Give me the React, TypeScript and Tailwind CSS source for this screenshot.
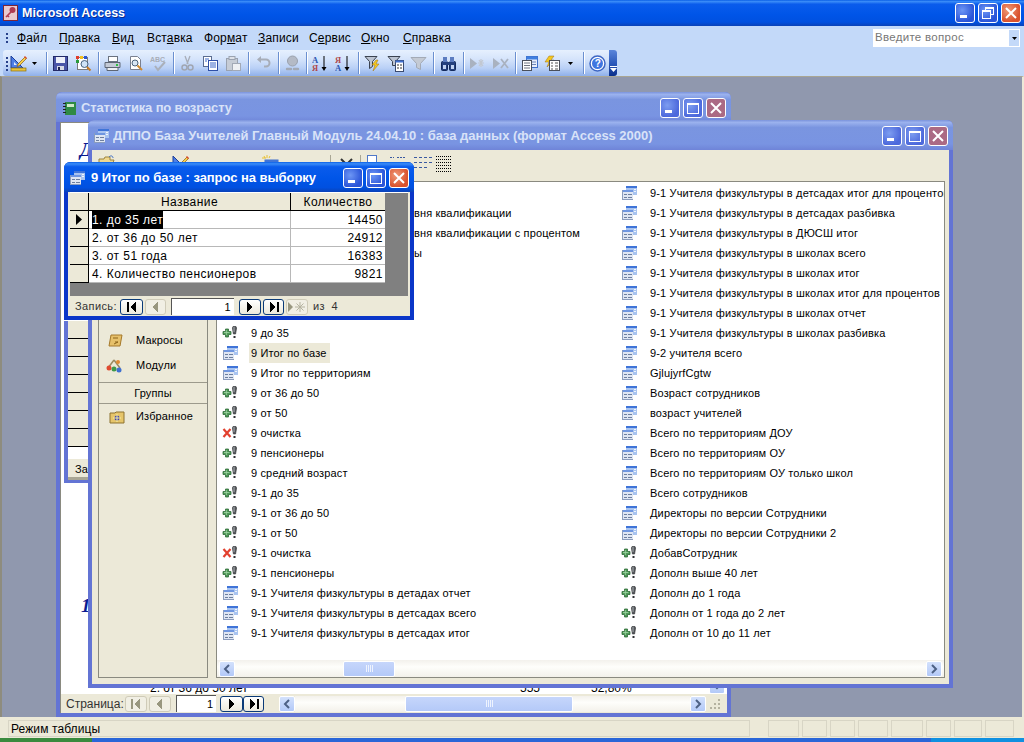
import type { ReactNode } from "react";

const ui = { fontFamily: '"Liberation Sans", Arial, sans-serif' };
const serif = { fontFamily: '"Liberation Serif", serif' };

const titleActive =
  "bg-[linear-gradient(180deg,#0a5fe6_0%,#3a8cf8_6%,#0a5cec_16%,#0055e8_55%,#0050e0_85%,#0a42b8_100%)]";
const titleInactive =
  "bg-[linear-gradient(180deg,#7b93dc_0%,#9bb2ee_8%,#7a95e0_25%,#7994e2_80%,#6f84d8_100%)]";

function QueryIcon() {
  return (
    <svg width="16" height="16" viewBox="0 0 16 16" shapeRendering="crispEdges">
      <rect x="5" y="1" width="11" height="9" fill="#a9c4f0" />
      <rect x="5" y="1" width="11" height="2" fill="#3f74d8" />
      <rect x="13" y="4" width="2" height="1" fill="#f0f5fd" />
      <rect x="13" y="6" width="2" height="1" fill="#f0f5fd" />
      <rect x="1" y="5" width="11" height="10" fill="#dfe6f3" />
      <rect x="1" y="5" width="11" height="2" fill="#6f96e0" />
      <rect x="1" y="14" width="11" height="1" fill="#8b9cbc" />
      <rect x="1" y="5" width="1" height="10" fill="#8b9cbc" />
      <rect x="3" y="9" width="3" height="1" fill="#6d7f9f" />
      <rect x="7" y="9" width="4" height="1" fill="#6d7f9f" />
      <rect x="3" y="12" width="3" height="1" fill="#6d7f9f" />
      <rect x="7" y="12" width="4" height="1" fill="#6d7f9f" />
    </svg>
  );
}

function Bang() {
  return (
    <g>
      <path d="M11 1.500h3l.6 1.500-1 6h-2.200l-1-6z" fill="#55585c" stroke="#2f3134" strokeWidth="0.6" />
      <rect x="11.500" y="2" width="1" height="5" fill="#a9adb2" />
      <rect x="11.500" y="11" width="2" height="2" fill="#2f3134" />
    </g>
  );
}

function PlusBang() {
  return (
    <svg width="16" height="16" viewBox="0 0 16 16">
      <path d="M3.500 4h3v2.500H9v3H6.500V12h-3V9.500H1v-3h2.500z" fill="#4f9a58" stroke="#2e6b38" strokeWidth="0.8" />
      <path d="M4.300 5v5M2 7.500h5.500" stroke="#9fd6a4" strokeWidth="0.8" />
      <Bang />
    </svg>
  );
}

function CrossBang() {
  return (
    <svg width="16" height="16" viewBox="0 0 16 16">
      <path d="M1.500 4l7 8M8.500 4l-7 8" stroke="#e2402e" strokeWidth="2.200" />
      <Bang />
    </svg>
  );
}

function Sep() {
  return (
    <div className="flex h-[22px] w-[6px] shrink-0 justify-center">
      <div className="h-full w-px bg-[#6a8fd0] shadow-[1px_0_0_#fff]" />
    </div>
  );
}

function Btn({ children, w = "w-[23px]" }: { children: ReactNode; w?: string }) {
  return <div className={`flex h-[22px] shrink-0 items-center justify-center ${w}`}>{children}</div>;
}

function Caret() {
  return (
    <svg width="5" height="3" viewBox="0 0 5 3">
      <path d="M0 0h5L2.500 3z" fill="#000" />
    </svg>
  );
}

function Caret2() {
  return (
    <svg width="7" height="4" viewBox="0 0 7 4">
      <path d="M0 0h7L3.500 4z" fill="#fff" />
    </svg>
  );
}

const S = ({ children }: { children: ReactNode }) => (
  <svg width="17" height="17" viewBox="0 0 17 17">
    {children}
  </svg>
);

function DesignGlyph() {
  return (
    <S>
      <path d="M1 1v12h12z" fill="#4d7fe6" stroke="#1d3f9a" />
      <path d="M4 7v3h3z" fill="#dfe9fb" />
      <path d="M8 9l7-7 1.500 1.500-7 7-2.500 1z" fill="#f6d04d" stroke="#8a5a10" strokeWidth="0.7" />
      <path d="M14 2l1-1 2 2-1 1z" fill="#d8482c" />
      <rect x="1" y="13" width="15" height="3" fill="#e8c23c" stroke="#8a7010" strokeWidth="0.7" />
    </S>
  );
}

function Toolbar() {
  return (
    <div className="relative z-10 flex h-[26px] shrink-0 items-center pl-[1px]">
      <div className="ml-[2px] flex h-[26px] w-[614px] items-center rounded-[3px] bg-[linear-gradient(180deg,#e6f0fe_0%,#d5e4fb_35%,#b9d0f6_70%,#8fb0ea_100%)]">
        <div className="ml-[3px] flex w-[7px] flex-col gap-[2px] pt-[1px]">
          {[0, 1, 2, 3].map((i) => (
            <div key={i} className="h-[2px] w-[2px] bg-[#27418a]" />
          ))}
        </div>
        <div className="flex h-[22px] w-[33px] shrink-0 items-center gap-[5px]">
          <DesignGlyph />
          <Caret />
        </div>
        <Sep />
        <Btn>
          <S>
            <rect x="1.500" y="1.500" width="14" height="14" fill="#4a55a8" stroke="#242a68" />
            <rect x="4" y="2" width="9" height="6" fill="#eef0fa" />
            <rect x="5" y="11" width="7" height="4" fill="#d8dae6" />
            <rect x="6" y="12" width="2" height="3" fill="#1e2250" />
          </S>
        </Btn>
        <Btn>
          <S>
            <rect x="2.500" y="2.500" width="10" height="12" fill="#fff" stroke="#7a7a7a" />
            <rect x="1" y="1" width="3" height="3" fill="#e23b2a" />
            <rect x="5" y="1" width="3" height="3" fill="#f0c020" />
            <rect x="1" y="5" width="3" height="3" fill="#2a9a3a" />
            <rect x="9" y="1" width="3" height="3" fill="#2a55d0" />
            <circle cx="9.500" cy="9" r="3.500" fill="#cfe3f7" stroke="#47627f" />
            <path d="M12 12l3.500 3.500" stroke="#c87a20" strokeWidth="2" />
          </S>
        </Btn>
        <Sep />
        <Btn>
          <S>
            <rect x="4.500" y="1.500" width="9" height="5" fill="#fff" stroke="#6a7280" />
            <path d="M1 7.500h15v5H1z" fill="#c4cad6" stroke="#5e6674" />
            <path d="M3 12.500h11v3H3z" fill="#eef0f4" stroke="#5e6674" />
            <rect x="12" y="9" width="2" height="2" fill="#30c040" />
          </S>
        </Btn>
        <Btn>
          <S>
            <path d="M3.500 1.500h7l3 3v10h-10z" fill="#fff" stroke="#7a8090" />
            <circle cx="8" cy="8" r="3" fill="#d9e7f5" stroke="#4c627a" />
            <path d="M10.500 10.500l4.500 4.500" stroke="#d08a30" strokeWidth="2" />
          </S>
        </Btn>
        <Btn>
          <svg width="17" height="17" viewBox="0 0 17 17">
            <text x="0" y="7" fontSize="7" fontWeight="700" fill="#a7adb8" style={ui}>
              ABC
            </text>
            <path d="M5 11l3 4 7-8" fill="none" stroke="#aab0ba" strokeWidth="2" />
          </svg>
        </Btn>
        <Sep />
        <Btn>
          <S>
            <path d="M6 1l3 8M11 1L8 9" stroke="#a7adb8" strokeWidth="1.300" />
            <circle cx="5.500" cy="12.500" r="2.500" fill="none" stroke="#a0a6b2" strokeWidth="1.500" />
            <circle cx="11.500" cy="12.500" r="2.500" fill="none" stroke="#a0a6b2" strokeWidth="1.500" />
          </S>
        </Btn>
        <Btn>
          <S>
            <rect x="1.500" y="1.500" width="8" height="10" fill="#fff" stroke="#5a6c90" />
            <rect x="6.500" y="5.500" width="9" height="10" fill="#fff" stroke="#2e4fa8" />
            <path d="M8 8h6M8 10h6M8 12h6M3 4h4M3 6h2" stroke="#3b66c8" />
          </S>
        </Btn>
        <Btn>
          <S>
            <rect x="1.500" y="3.500" width="11" height="12" fill="#c6ccd6" stroke="#9aa2b0" />
            <rect x="4" y="1.500" width="6" height="3" fill="#dde1e8" stroke="#9aa2b0" />
            <rect x="7.500" y="8.500" width="8" height="7" fill="#eef0f4" stroke="#a2a9b6" />
          </S>
        </Btn>
        <Sep />
        <Btn w="w-[24px]">
          <S>
            <path d="M5 4.500h6a3.500 3.500 0 0 1 0 7H9" fill="none" stroke="#a7adb8" strokeWidth="2" />
            <path d="M6 1v7L2 4.500z" fill="#a7adb8" />
          </S>
        </Btn>
        <Sep />
        <Btn w="w-[22px]">
          <S>
            <circle cx="8.500" cy="6" r="5" fill="#b4bac6" stroke="#9aa1ae" />
            <path d="M3 14h4M10 14h4" stroke="#a2a9b6" strokeWidth="2.400" strokeLinecap="round" />
          </S>
        </Btn>
        <Sep />
        <Btn>
          <svg width="17" height="17" viewBox="0 0 17 17">
            <text x="0" y="7.500" fontSize="8.500" fontWeight="700" fill="#2b56b0" style={serif}>
              А
            </text>
            <text x="0" y="16" fontSize="8.500" fontWeight="700" fill="#b04a4a" style={serif}>
              Я
            </text>
            <path d="M12 1v12" stroke="#000" />
            <path d="M9.500 12h5L12 16z" fill="#000" />
          </svg>
        </Btn>
        <Btn>
          <svg width="17" height="17" viewBox="0 0 17 17">
            <text x="0" y="7.500" fontSize="8.500" fontWeight="700" fill="#b04a4a" style={serif}>
              Я
            </text>
            <text x="0" y="16" fontSize="8.500" fontWeight="700" fill="#2b56b0" style={serif}>
              А
            </text>
            <path d="M12 1v12" stroke="#000" />
            <path d="M9.500 12h5L12 16z" fill="#000" />
          </svg>
        </Btn>
        <Sep />
        <Btn>
          <S>
            <path d="M1 1.500h12l-4.500 5v5l-3 2v-7z" fill="#bcc4d2" stroke="#3a4250" />
            <path d="M12 5l-4 5h3l-2 6 6-7h-3l2-4z" fill="#f4c820" stroke="#a07010" strokeWidth="0.5" />
          </S>
        </Btn>
        <Btn>
          <S>
            <path d="M1 1.500h12l-4.500 5v4h-3v-4z" fill="#bcc4d2" stroke="#3a4250" />
            <rect x="8.500" y="5.500" width="8" height="11" fill="#fff" stroke="#3a4a70" />
            <rect x="8.500" y="5.500" width="8" height="2" fill="#3f6fd0" />
            <path d="M10 10h2M13 10h2M10 13h2M13 13h2" stroke="#333" />
          </S>
        </Btn>
        <Btn>
          <S>
            <path d="M1 2.500h15l-5.500 6v6l-4 -2v-4z" fill="#c4cad4" stroke="#a3aab6" />
          </S>
        </Btn>
        <Sep />
        <Btn w="w-[24px]">
          <S>
            <rect x="1.500" y="6.500" width="6" height="9" rx="1" fill="#24407e" stroke="#142a5c" />
            <rect x="9.500" y="6.500" width="6" height="9" rx="1" fill="#24407e" stroke="#142a5c" />
            <rect x="3" y="2" width="4" height="5" fill="#5c7cc0" />
            <rect x="10" y="2" width="4" height="5" fill="#5c7cc0" />
            <rect x="7" y="7" width="3" height="3" fill="#24407e" />
            <rect x="3" y="10" width="3" height="4" fill="#c0d2f2" />
            <rect x="11" y="10" width="3" height="4" fill="#c0d2f2" />
          </S>
        </Btn>
        <Sep />
        <Btn>
          <S>
            <path d="M1 3l7 5.500L1 14z" fill="#a9b2c0" />
            <path d="M10 5l4 6M14 5l-4 6M9 8h6M12 4v8" stroke="#c2c8d2" strokeWidth="1.200" />
          </S>
        </Btn>
        <Btn>
          <S>
            <path d="M1 3l7 5.500L1 14z" fill="#a9b2c0" />
            <path d="M9 4l7 9M16 4l-7 9" stroke="#a9b2c0" strokeWidth="1.800" />
          </S>
        </Btn>
        <Sep />
        <Btn>
          <S>
            <rect x="5.500" y="1.500" width="11" height="11" fill="#e8eefb" stroke="#3f6fc8" />
            <rect x="5.500" y="1.500" width="11" height="3" fill="#3f7fe0" />
            <path d="M8 7h7M8 9.500h7" stroke="#6b85b8" />
            <rect x="1.500" y="5.500" width="9" height="10" fill="#fff" stroke="#4a4f5a" />
            <path d="M3 8h6M3 10.500h6M3 13h6" stroke="#6f7480" />
          </S>
        </Btn>
        <div className="flex h-[22px] w-[39px] shrink-0 items-center gap-[8px] pl-[2px]">
          <S>
            <path d="M6 1H11L8 5h3l-7 7 2-5H2z" fill="#f4c820" stroke="#a07010" strokeWidth="0.5" />
            <rect x="6.500" y="5.500" width="10" height="10" fill="#fff" stroke="#4a4f5a" />
            <path d="M8 8h2M12 8h3M8 11h2M12 11h3M8 14h2M12 14h3" stroke="#555" />
          </S>
          <Caret />
        </div>
        <Sep />
        <Btn>
          <S>
            <circle cx="8.500" cy="8.500" r="7.500" fill="#fff" stroke="#3d66c4" strokeWidth="1.500" />
            <circle cx="8.500" cy="8.500" r="5.500" fill="#3f76e0" />
            <text x="5.700" y="12" fontSize="10" fontWeight="700" fill="#fff" style={ui}>
              ?
            </text>
          </S>
        </Btn>
        <div className="ml-auto flex h-[26px] w-[12px] flex-col items-center justify-end rounded-r-[3px] bg-[linear-gradient(180deg,#5a85da_0%,#2a57b8_55%,#0b2f8a_100%)] pb-[4px]">
          <div className="mb-[1px] h-px w-[7px] bg-white" />
          <Caret2 />
        </div>
      </div>
    </div>
  );
}

function Cap({ kind, faded = false }: { kind: "min" | "max" | "restore" | "close"; faded?: boolean }) {
  const bg =
    kind === "close"
      ? faded
        ? "bg-[#ab6a84]"
        : "bg-[radial-gradient(circle_at_35%_35%,#f09a78,#d9512d_70%)]"
      : faded
        ? "bg-[radial-gradient(circle_at_35%_35%,#7d9df0,#4d69dc_70%)]"
        : "bg-[radial-gradient(circle_at_35%_35%,#6d96f5,#2b55d8_70%)]";
  return (
    <div className={`flex h-[20px] w-[20px] items-center justify-center rounded-[3px] border border-white ${bg}`}>
      <svg width="14" height="14" viewBox="0 0 14 14" shapeRendering="crispEdges">
        {kind === "min" && <rect x="2" y="9" width="7" height="3" fill="#fff" />}
        {kind === "max" && <path d="M1.500 2.500h11v10h-11z" fill="none" stroke="#fff" />}
        {kind === "max" && <rect x="1" y="2" width="12" height="2" fill="#fff" />}
        {kind === "restore" && (
          <g fill="none" stroke="#fff">
            <path d="M4.500 4V1.500h8v7H10" />
            <rect x="1.500" y="4.500" width="8" height="8" />
            <path d="M1.500 5.500h8M4.500 2.500h8" />
          </g>
        )}
        {kind === "close" && <path d="M2 2l10 10M12 2L2 12" stroke="#fff" strokeWidth="2" shapeRendering="auto" />}
      </svg>
    </div>
  );
}

function Win({
  className,
  title,
  titleClass,
  icon,
  active = false,
  pad,
  children,
}: {
  className: string;
  title: string;
  titleClass: string;
  icon: ReactNode;
  active?: boolean;
  pad: string;
  children: ReactNode;
}) {
  return (
    <div className={`absolute flex flex-col rounded-t-[6px] ${active ? "bg-[#0a36c8]" : "bg-[#6374d4]"} ${className}`}>
      <div className={`flex h-[30px] shrink-0 items-center rounded-t-[6px] pt-[2px] pr-[5px] ${active ? titleActive : titleInactive} ${pad}`}>
        {icon}
        <div className={`min-w-0 flex-1 truncate text-[13px] font-bold ${titleClass} ${active ? "text-white" : "text-[#d8e2f8]"}`}>{title}</div>
        <div className="flex gap-[3px]">
          <Cap kind="min" faded={!active} />
          <Cap kind="max" faded={!active} />
          <Cap kind="close" faded={!active} />
        </div>
      </div>
      {children}
    </div>
  );
}

function Glyph({ d }: { d: "first" | "prev" | "next" | "last" }) {
  return (
    <svg width="12" height="10" viewBox="0 0 12 10" shapeRendering="crispEdges">
      {d === "first" && <path d="M1 0h2v10H1zM10 0v10L4 5z" />}
      {d === "prev" && <path d="M8 0v10L2 5z" />}
      {d === "next" && <path d="M3 0v10l6-5z" />}
      {d === "last" && <path d="M2 0v10l6-5zM9 0h2v10H9z" />}
    </svg>
  );
}

function NavBtn({ d, w, off = false }: { d: "first" | "prev" | "next" | "last"; w: string; off?: boolean }) {
  return (
    <div
      className={`flex h-[16px] shrink-0 items-center justify-center rounded-[3px] border ${w} ${
        off ? "border-[#cfcbb8] bg-[#f1efe4] fill-[#99977f]" : "border-[#0a3a78] bg-[linear-gradient(180deg,#ffffff,#ece9dc)] fill-black"
      }`}
    >
      <Glyph d={d} />
    </div>
  );
}

function ScrollArrow({ dir, className = "" }: { dir: "left" | "right" | "down"; className?: string }) {
  const paths = { left: "M7 1L3 5l4 4", right: "M3 1l4 4-4 4", down: "M1 3l4 4 4-4" };
  return (
    <div className={`flex h-[16px] w-[16px] shrink-0 items-center justify-center rounded-[2px] border border-white bg-[linear-gradient(180deg,#d3e1fc,#b3c9f8)] ${className}`}>
      <svg width="10" height="10" viewBox="0 0 10 10">
        <path d={paths[dir]} fill="none" stroke="#4d6185" strokeWidth="2" />
      </svg>
    </div>
  );
}

function Thumb({ className }: { className: string }) {
  return (
    <div className={`flex h-[16px] shrink-0 items-center justify-center gap-px rounded-[2px] border border-white bg-[linear-gradient(180deg,#c6d6fb,#b4c9f8)] ${className}`}>
      {[0, 1, 2, 3].map((i) => (
        <div key={i} className="h-[7px] w-px bg-[#eef3fe]" />
      ))}
    </div>
  );
}

const track = "bg-[linear-gradient(180deg,#f3f1ec,#fefefb_40%,#f3f1ea)]";

type Kind = "q" | "p" | "x" | "";

// верхние строки левой колонки закрыты окном запроса, видны только хвосты
const leftRows: [Kind, string][] = [
  ["", ""],
  ["", "вня квалификации"],
  ["", "вня квалификации с процентом"],
  ["", "ы"],
  ["", ""],
  ["", ""],
  ["", ""],
  ["p", "9 до 35"],
  ["q", "9 Итог по базе"],
  ["q", "9 Итог по территориям"],
  ["p", "9 от 36 до 50"],
  ["p", "9 от 50"],
  ["x", "9 очистка"],
  ["p", "9 пенсионеры"],
  ["p", "9 средний возраст"],
  ["p", "9-1 до 35"],
  ["p", "9-1 от 36 до 50"],
  ["p", "9-1 от 50"],
  ["x", "9-1 очистка"],
  ["p", "9-1 пенсионеры"],
  ["q", "9-1 Учителя физкультуры в детадах отчет"],
  ["q", "9-1 Учителя физкультуры в детсадах всего"],
  ["q", "9-1 Учителя физкультуры в детсадах итог"],
];

const rightRows: [Kind, string][] = [
  ["q", "9-1 Учителя физкультуры в детсадах итог для процентов"],
  ["q", "9-1 Учителя физкультуры в детсадах разбивка"],
  ["q", "9-1 Учителя физкультуры в ДЮСШ  итог"],
  ["q", "9-1 Учителя физкультуры в школах всего"],
  ["q", "9-1 Учителя физкультуры в школах итог"],
  ["q", "9-1 Учителя физкультуры в школах итог для процентов"],
  ["q", "9-1 Учителя физкультуры в школах отчет"],
  ["q", "9-1 Учителя физкультуры в школах разбивка"],
  ["q", "9-2 учителя всего"],
  ["q", "GjlujyrfCgtw"],
  ["q", "Возраст сотрудников"],
  ["q", "возраст учителей"],
  ["q", "Всего по территориям ДОУ"],
  ["q", "Всего по территориям ОУ"],
  ["q", "Всего по территориям ОУ только школ"],
  ["q", "Всего сотрудников"],
  ["q", "Директоры по версии Сотрудники"],
  ["q", "Директоры по версии Сотрудники 2"],
  ["p", "ДобавСотрудник"],
  ["p", "Дополн выше 40 лет"],
  ["p", "Дополн до 1 года"],
  ["p", "Дополн от 1 года до 2 лет"],
  ["p", "Дополн от 10 до 11 лет"],
];

function ListColumn({ rows, className }: { rows: [Kind, string][]; className: string }) {
  return (
    <div className={`flex shrink-0 flex-col ${className}`}>
      {rows.map(([k, t], i) => (
        <div key={i} className="flex h-[20px] items-center">
          <div className="flex w-[27px] shrink-0">
            {k === "q" && <QueryIcon />}
            {k === "p" && <PlusBang />}
            {k === "x" && <CrossBang />}
          </div>
          <div className={`whitespace-nowrap pl-[2px] leading-[20px] ${k === "" ? "ml-[163px]" : ""} ${t === "9 Итог по базе" ? "bg-[#ece9d8] pr-[3px]" : ""}`}>
            {t}
          </div>
        </div>
      ))}
    </div>
  );
}

function DbToolbar() {
  return (
    <div className="flex h-[31px] shrink-0 items-start pl-[6px] pt-[5px] text-[11px]">
      <div className="flex w-[74px] shrink-0 gap-[4px]">
        <svg width="17" height="14" viewBox="0 0 17 14">
          <path d="M1 4h5l1-2h5v3h4l-3 8H1z" fill="#f0d890" stroke="#9c8440" />
          <path d="M11 2c2-2 4-1 4 1" fill="none" stroke="#3a6ac0" />
        </svg>
        <span className="pt-[3px]">Открыть</span>
      </div>
      <div className="flex w-[90px] shrink-0 gap-[4px]">
        <DesignGlyph />
        <span className="pt-[3px]">Конструктор</span>
      </div>
      <div className="flex w-[68px] shrink-0 gap-[3px]">
        <svg width="17" height="15" viewBox="0 0 17 15">
          <path d="M2 1l1 2M5 0v3M8 1L7 3M0 3h4" stroke="#e8c030" />
          <rect x="3" y="5" width="13" height="9" fill="#a9c4f0" stroke="#3f6fc8" />
          <rect x="3" y="5" width="13" height="2" fill="#3f74d8" />
        </svg>
        <span className="pt-[3px]">Создать</span>
      </div>
      <div className="h-[18px] w-px shrink-0 bg-[#a9a694]" />
      <div className="ml-[9px] mt-[3px] shrink-0">
        <svg width="13" height="13" viewBox="0 0 13 13">
          <path d="M1 1l11 11M12 1L1 12" stroke="#333" strokeWidth="2" />
        </svg>
      </div>
      <div className="ml-[7px] h-[18px] w-px shrink-0 bg-[#a9a694]" />
      <div className="ml-[6px] shrink-0">
        <svg width="10" height="12" viewBox="0 0 10 12" shapeRendering="crispEdges">
          <rect x="0" y="0" width="9" height="9" fill="#fff" stroke="#4f78c8" />
        </svg>
      </div>
      <div className="ml-[13px] shrink-0">
        <svg width="16" height="12" viewBox="0 0 16 12" shapeRendering="crispEdges">
          <path d="M0 2h4M7 2h8" stroke="#3a5aa0" strokeDasharray="2 1" />
        </svg>
      </div>
      <div className="ml-[8px] shrink-0">
        <svg width="18" height="16" viewBox="0 0 18 16" shapeRendering="crispEdges">
          <path d="M0 2h3M5 2h3M10 2h3M15 2h3M0 7h3M5 7h3M10 7h3M15 7h3M0 12h3M5 12h3M10 12h3" stroke="#3a5aa0" />
        </svg>
      </div>
      <div className="ml-[4px] shrink-0">
        <svg width="16" height="17" viewBox="0 0 16 17" shapeRendering="crispEdges">
          <path d="M0 1h16M0 4h16M0 7h16M0 10h16M0 13h16M0 16h16" stroke="#000" strokeDasharray="1 1" />
        </svg>
      </div>
    </div>
  );
}

function DbWindow() {
  return (
    <Win
      className="left-[86px] top-[43px] h-[568px] w-[865px]"
      title="ДППО База Учителей Главный Модуль 24.04.10 : база данных (формат Access 2000)"
      titleClass="tracking-[-0.04px]"
      icon={
        <div className="mr-[4px] w-[16px] shrink-0">
          <QueryIcon />
        </div>
      }
      pad="pl-[5px]"
    >
      <div className="mx-[4px] mb-[4px] flex min-h-0 flex-1 flex-col bg-[#ece9d8]">
        <DbToolbar />
        <div className="mb-[6px] ml-[6px] mr-[4px] flex min-h-0 flex-1 gap-[8px]">
          <div className="flex w-[110px] shrink-0 flex-col border border-[#8a8a80] bg-[#ece9d8] text-[11px] tracking-[0.15px]">
            <div className="h-[146px] shrink-0" />
            <div className="flex h-[25px] items-center pl-[9px]">
              <svg className="mr-[12px]" width="16" height="16" viewBox="0 0 16 16">
                <path d="M3 2h11l-2 11H1z" fill="#e6c06a" stroke="#a5792a" />
                <path d="M5 5h5M7 9h3l-4 2" stroke="#8a6318" fill="none" />
              </svg>
              Макросы
            </div>
            <div className="flex h-[25px] items-center pl-[7px]">
              <svg className="mr-[14px]" width="16" height="16" viewBox="0 0 16 16">
                <path d="M2 10l6-8M14 10L8 2" stroke="#9a8a60" strokeWidth="1.500" />
                <circle cx="3" cy="10" r="2.500" fill="#e04a30" />
                <circle cx="8" cy="11" r="2.500" fill="#3f9a4a" />
                <circle cx="13" cy="12" r="2.500" fill="#3f70d0" />
                <circle cx="12" cy="4" r="2" fill="#e08a30" />
              </svg>
              Модули
            </div>
            <div className="mt-[4px] flex h-[22px] items-center justify-center border-y border-[#9c9a8c]">Группы</div>
            <div className="flex h-[25px] items-center pl-[10px]">
              <svg className="mr-[11px]" width="16" height="14" viewBox="0 0 16 14">
                <path d="M1 3h5l1-1h8v11H1z" fill="#e6c56a" stroke="#8d7230" />
                <circle cx="8" cy="8" r="2.500" fill="#3a3fb0" />
                <path d="M8 4v8M4 8h8" stroke="#f8f0a0" />
              </svg>
              Избранное
            </div>
          </div>
          <div className="flex min-w-0 flex-1 flex-col border border-[#8a8a80] bg-white text-[11px] tracking-[0.15px] text-black">
            <div className="flex min-h-0 flex-1 gap-[8px] overflow-hidden pl-[5px] pt-[1px]">
              <ListColumn rows={leftRows} className="w-[391px]" />
              <ListColumn rows={rightRows} className="w-[320px]" />
            </div>
            <div className={`flex h-[17px] shrink-0 items-center px-[2px] ${track}`}>
              <ScrollArrow dir="left" />
              <Thumb className="ml-[108px] w-[52px]" />
              <div className="flex-1" />
              <ScrollArrow dir="right" />
            </div>
          </div>
        </div>
      </div>
    </Win>
  );
}

const queryRows: [string, string][] = [
  ["1. до 35 лет", "14450"],
  ["2. от 36 до 50 лет", "24912"],
  ["3. от 51 года", "16383"],
  ["4. Количество пенсионеров", "9821"],
];

function QueryWindow() {
  return (
    <Win
      className="left-[62px] top-[85px] h-[158px] w-[350px]"
      title="9 Итог по базе : запрос на выборку"
      titleClass="tracking-[-0.05px]"
      icon={
        <div className="mr-[5px] w-[17px] shrink-0">
          <QueryIcon />
        </div>
      }
      active
      pad="pl-[5px]"
    >
      <div className="mx-[4px] mb-[4px] flex min-h-0 flex-1 flex-col bg-[#ece9d8] text-[12px] tracking-[0.45px] text-black">
        <div className="mx-[2px] h-[104px] shrink-0 border-t border-white bg-[#808080]">
          <div className="grid w-[315px] grid-cols-[19px_202px_94px]">
            <div className="h-[18px] border-b border-r border-black bg-[#ece9d8]" />
            <div className="flex h-[18px] items-center justify-center border-b border-r border-black bg-[#ece9d8] pt-[1px]">Название</div>
            <div className="flex h-[18px] items-center justify-center border-b border-black bg-[#ece9d8] pt-[1px]">Количество</div>
            {queryRows.map(([name, n], i) => (
              <div key={name} className="contents">
                <div className="flex h-[18px] items-center justify-center border-b border-r border-black bg-[#ece9d8]">
                  {i === 0 && (
                    <svg width="8" height="11" viewBox="0 0 8 11">
                      <path d="M1 0v11l6-5.500z" fill="#000" />
                    </svg>
                  )}
                </div>
                <div className="flex h-[18px] items-center border-b border-r border-[#b8b8b8] bg-white pl-[3px] pt-[1px]">
                  <span className={i === 0 ? "bg-black text-white" : ""}>{name}</span>
                </div>
                <div className="flex h-[18px] items-center justify-end border-b border-[#b8b8b8] bg-white pr-[2px] pt-[1px]">{n}</div>
              </div>
            ))}
          </div>
        </div>
        <div className="flex flex-1 items-center pl-[7px] pt-[1px] text-[#333]">
          <span className="w-[45px] text-[11px] tracking-[0.4px]">Запись:</span>
          <NavBtn d="first" w="w-[23px]" />
          <div className="w-[2px]" />
          <NavBtn d="prev" w="w-[21px]" off />
          <div className="ml-[5px] flex h-[17px] w-[63px] items-center justify-end border-l border-t border-[#555] bg-white pr-[3px] text-[11px] text-black">1</div>
          <div className="w-[5px]" />
          <NavBtn d="next" w="w-[22px]" />
          <div className="w-[2px]" />
          <NavBtn d="last" w="w-[21px]" />
          <div className="ml-[2px] flex h-[16px] w-[22px] items-center justify-center rounded-[3px] border border-[#cfcbb8] bg-[#f1efe4]">
            <svg width="18" height="10" viewBox="0 0 18 10">
              <path d="M0 0v10l5-5z" fill="#99977f" />
              <path d="M12 0v10M7 5h10M8.500 1.500l7 7M15.500 1.500l-7 7" stroke="#b5b3a0" />
            </svg>
          </div>
          <span className="ml-[5px] text-[11px] tracking-[0.3px]">из&nbsp;&nbsp;4</span>
        </div>
      </div>
    </Win>
  );
}

function StatsWindow() {
  return (
    <Win
      className="left-[54px] top-[15px] h-[625px] w-[675px]"
      title="Статистика по возрасту"
      titleClass="tracking-[-0.15px]"
      icon={
        <svg className="mr-[5px] shrink-0" width="13" height="13" viewBox="0 0 13 13" shapeRendering="crispEdges">
          <rect x="2" y="0" width="11" height="13" fill="#2f8a45" />
          <rect x="4" y="2" width="7" height="3" fill="#cfe8c8" />
          <path d="M0 1h3M0 4h3M0 7h3M0 10h3" stroke="#222" />
        </svg>
      }
      pad="pl-[7px]"
    >
      <div className="relative mx-[4px] mb-[4px] flex min-h-0 flex-1 flex-col border-l border-t border-[#8a8a80] bg-white">
        <div className="flex-1 overflow-hidden">
          <div className="pl-[19px] pt-[16px] text-[19px] font-bold italic leading-[22px] text-[#0a1a90]" style={serif}>
            Д
          </div>
          <div className="pl-[20px] pt-[434px] text-[19px] font-bold italic leading-[22px] text-[#0a1a90]" style={serif}>
            1
          </div>
          <div className="flex items-start pl-[89px] pt-[64px] text-[12px] leading-[14px] text-black">
            <span className="w-[370px]">2. от 36 до 50 лет</span>
            <span className="w-[71px]">555</span>
            <span>52,80%</span>
          </div>
        </div>
        {/* окно запроса, что лежит за базой данных */}
        <div className="absolute left-[3px] top-[198px] h-[162px] w-[30px] border-b-[3px] border-l-[4px] border-[#6374d4] bg-white">
          <div className="flex h-full flex-col">
            {[0, 1, 2, 3, 4, 5, 6].map((i) => (
              <div key={i} className="h-[18px] shrink-0 border-b border-black bg-[#ece9d8]" />
            ))}
            <div className="h-[12px] shrink-0 bg-white" />
            <div className="flex-1 overflow-hidden border-b-[3px] border-[#a9a694] bg-[#ece9d8] pl-[7px] pt-[2px] text-[11px]">За</div>
          </div>
        </div>
        <div className="flex h-[19px] shrink-0 items-center bg-[#ece9d8] pl-[5px] text-[12px] text-[#333]">
          <span className="w-[59px]">Страница:</span>
          <NavBtn d="first" w="w-[22px]" off />
          <div className="w-[2px]" />
          <NavBtn d="prev" w="w-[22px]" off />
          <div className="ml-[5px] flex h-[17px] w-[40px] items-center justify-end border-l border-t border-[#555] bg-white pr-[3px] text-[11px] text-black">1</div>
          <div className="w-[4px]" />
          <NavBtn d="next" w="w-[23px]" />
          <NavBtn d="last" w="w-[21px]" />
          <div className="ml-[15px] flex h-[17px] w-[427px] shrink-0 items-center">
            <ScrollArrow dir="left" />
            <div className={`flex h-[16px] flex-1 items-center ${track}`}>
              <Thumb className="ml-[110px] w-[168px]" />
            </div>
            <ScrollArrow dir="right" />
          </div>
          <svg className="ml-[3px] shrink-0" width="12" height="12" viewBox="0 0 12 12" shapeRendering="crispEdges">
            <path d="M9 1h2v2H9zM5 5h2v2H5zM9 5h2v2H9zM1 9h2v2H1zM5 9h2v2H5zM9 9h2v2H9z" fill="#b5b2a0" />
          </svg>
        </div>
        <ScrollArrow dir="down" className="absolute bottom-[19px] right-[2px] h-[8px] overflow-hidden" />
      </div>
    </Win>
  );
}

const menus = [
  { t: ["", "Ф", "айл"], w: "w-[42px]" },
  { t: ["", "П", "равка"], w: "w-[53px]" },
  { t: ["", "В", "ид"], w: "w-[35px]" },
  { t: ["Вст", "а", "вка"], w: "w-[57px]" },
  { t: ["Фор", "м", "ат"], w: "w-[54px]" },
  { t: ["", "З", "аписи"], w: "w-[51px]" },
  { t: ["С", "е", "рвис"], w: "w-[52px]" },
  { t: ["", "О", "кно"], w: "w-[42px]" },
  { t: ["", "С", "правка"], w: "w-[60px]" },
];

const panes = ["w-[31px]", "w-[25px]", "w-[25px]", "w-[30px]", "w-[32px]", "w-[25px]", "w-[28px]", "w-[29px]"];

export default function App() {
  return (
    <div className="flex h-[742px] w-[1024px] flex-col overflow-hidden bg-[#c3d9f9] text-black" style={ui}>
      <div className={`flex h-[26px] shrink-0 items-center pr-[3px] ${titleActive}`}>
        <svg className="ml-[3px] mr-[4px]" width="15" height="16" viewBox="0 0 15 16">
          <rect x="0.500" y="0.500" width="14" height="15" fill="#e9c9cf" stroke="#7c2638" />
          <circle cx="9.500" cy="5" r="3" fill="#b03a52" />
          <path d="M8 7l-5 5M4 10l2 2" stroke="#b03a52" strokeWidth="1.600" />
        </svg>
        <div className="flex-1 text-[12.500px] font-bold text-white [text-shadow:1px_1px_0_#0a2a90]">Microsoft Access</div>
        <div className="flex gap-[3px]">
          <Cap kind="min" />
          <Cap kind="restore" />
          <Cap kind="close" />
        </div>
      </div>

      <div className="flex h-[24px] shrink-0 items-center pr-[4px] text-[12px] tracking-[0.15px]">
        <div className="ml-[6px] mr-[9px] flex w-[2px] flex-col gap-[2px]">
          {[0, 1, 2].map((i) => (
            <div key={i} className="h-[2px] w-[2px] bg-[#27418a]" />
          ))}
        </div>
        {menus.map((m) => (
          <div key={m.t.join("")} className={`shrink-0 ${m.w}`}>
            {m.t[0]}
            <span className="underline">{m.t[1]}</span>
            {m.t[2]}
          </div>
        ))}
        <div className="ml-auto flex h-[18px] w-[147px] items-center bg-white pl-[2px] text-[11.500px] tracking-[0.3px] text-[#777]">
          <span className="flex-1">Введите вопрос</span>
          <div className="flex h-full w-[12px] items-center justify-center border border-white bg-[#c3d9f9]">
            <Caret />
          </div>
        </div>
      </div>

      <Toolbar />

      <div className="relative min-h-0 flex-1 border-x-2 border-t border-[#a9a694] border-r-[#ece9d8] border-l-[#8e8c7e] bg-[#9098ae]">
        <StatsWindow />
        <DbWindow />
        <QueryWindow />
      </div>

      <div className="flex h-[21px] shrink-0 items-end gap-[3px] bg-[#ece9d8] pb-[1px] pl-[8px] pr-[8px] text-[12px] tracking-[0.1px]">
        <div className="flex h-[17px] w-[742px] items-center border border-[#d8d5c5] pl-[2px]">Режим таблицы</div>
        <div className="w-[12px]" />
        {panes.map((w, i) => (
          <div key={i} className={`h-[17px] border border-[#d8d5c5] ${w}`} />
        ))}
      </div>
      <div className="flex h-[4px] shrink-0 bg-[#2a66d8]">
        <div className="w-[92px] bg-[#3a8a3e]" />
        <div className="flex-1" />
        <div className="w-[93px] bg-[#1090e0]" />
      </div>
    </div>
  );
}
